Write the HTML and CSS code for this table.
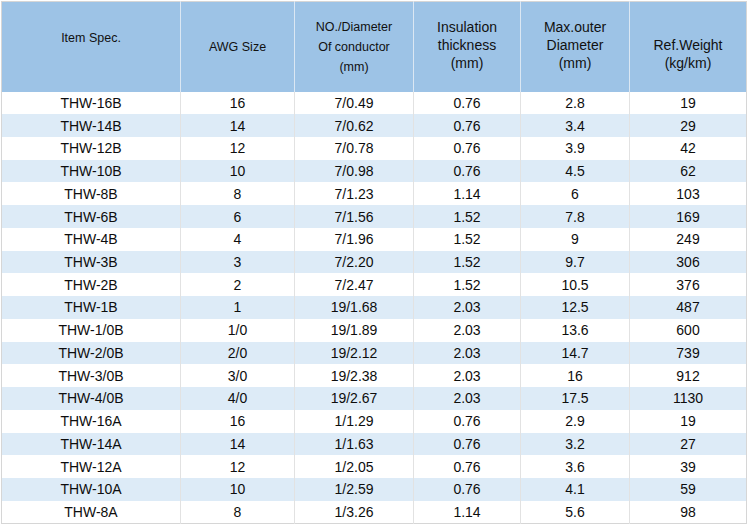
FILE: index.html
```html
<!DOCTYPE html>
<html>
<head>
<meta charset="utf-8">
<link rel="stylesheet" href="styles.css">
</head>
<body>
<table class="spec">
  <colgroup>
    <col class="c1"><col class="c2"><col class="c3"><col class="c4"><col class="c5"><col class="c6">
  </colgroup>
  <thead>
    <tr class="head">
      <th class="sm top">Item Spec.</th>
      <th class="sm">AWG Size</th>
      <th class="sm">NO./Diameter<br>Of conductor<br>(mm)</th>
      <th class="lg">Insulation<br>thickness<br>(mm)</th>
      <th class="lg">Max.outer<br>Diameter<br>(mm)</th>
      <th class="lg low">Ref.Weight<br>(kg/km)</th>
    </tr>
  </thead>
  <tbody>
    <tr><td>THW-16B</td><td>16</td><td>7/0.49</td><td>0.76</td><td>2.8</td><td>19</td></tr>
    <tr><td>THW-14B</td><td>14</td><td>7/0.62</td><td>0.76</td><td>3.4</td><td>29</td></tr>
    <tr><td>THW-12B</td><td>12</td><td>7/0.78</td><td>0.76</td><td>3.9</td><td>42</td></tr>
    <tr><td>THW-10B</td><td>10</td><td>7/0.98</td><td>0.76</td><td>4.5</td><td>62</td></tr>
    <tr><td>THW-8B</td><td>8</td><td>7/1.23</td><td>1.14</td><td>6</td><td>103</td></tr>
    <tr><td>THW-6B</td><td>6</td><td>7/1.56</td><td>1.52</td><td>7.8</td><td>169</td></tr>
    <tr><td>THW-4B</td><td>4</td><td>7/1.96</td><td>1.52</td><td>9</td><td>249</td></tr>
    <tr><td>THW-3B</td><td>3</td><td>7/2.20</td><td>1.52</td><td>9.7</td><td>306</td></tr>
    <tr><td>THW-2B</td><td>2</td><td>7/2.47</td><td>1.52</td><td>10.5</td><td>376</td></tr>
    <tr><td>THW-1B</td><td>1</td><td>19/1.68</td><td>2.03</td><td>12.5</td><td>487</td></tr>
    <tr><td>THW-1/0B</td><td>1/0</td><td>19/1.89</td><td>2.03</td><td>13.6</td><td>600</td></tr>
    <tr><td>THW-2/0B</td><td>2/0</td><td>19/2.12</td><td>2.03</td><td>14.7</td><td>739</td></tr>
    <tr><td>THW-3/0B</td><td>3/0</td><td>19/2.38</td><td>2.03</td><td>16</td><td>912</td></tr>
    <tr><td>THW-4/0B</td><td>4/0</td><td>19/2.67</td><td>2.03</td><td>17.5</td><td>1130</td></tr>
    <tr><td>THW-16A</td><td>16</td><td>1/1.29</td><td>0.76</td><td>2.9</td><td>19</td></tr>
    <tr><td>THW-14A</td><td>14</td><td>1/1.63</td><td>0.76</td><td>3.2</td><td>27</td></tr>
    <tr><td>THW-12A</td><td>12</td><td>1/2.05</td><td>0.76</td><td>3.6</td><td>39</td></tr>
    <tr><td>THW-10A</td><td>10</td><td>1/2.59</td><td>0.76</td><td>4.1</td><td>59</td></tr>
    <tr><td>THW-8A</td><td>8</td><td>1/3.26</td><td>1.14</td><td>5.6</td><td>98</td></tr>
  </tbody>
</table>
</body>
</html>
```

FILE: styles.css
```css
html, body {
  margin: 0;
  padding: 0;
  background: #ffffff;
}

body {
  padding: 1px 0 0 1px;
  font-family: "Liberation Sans", Arial, sans-serif;
  color: #000000;
}

.spec {
  border-collapse: collapse;
  table-layout: fixed;
  width: 745px;
  border: 1px solid #d6d6d6;
}

.c1 { width: 179px; }
.c2 { width: 114px; }
.c3 { width: 119px; }
.c4 { width: 107px; }
.c5 { width: 109px; }
.c6 { width: 117px; }

.head {
  height: 90px;
  background: #9dc3e6;
}

.head th {
  font-weight: normal;
  text-align: center;
  vertical-align: middle;
  padding: 0;
  color: #111111;
  border-left: 1px solid #dbe7f3;
}

.head th:first-child { border-left: none; }

.head .sm {
  font-size: 12.5px;
  line-height: 20px;
}

.head .lg {
  font-size: 14px;
  line-height: 18px;
  padding-bottom: 3px;
}

.head .top {
  vertical-align: top;
  padding-top: 26px;
}

.head .low {
  padding-top: 14px;
  padding-bottom: 0;
}

tbody tr {
  height: 22.74px;
}

tbody tr:nth-child(even) {
  background: #ddebf7;
}

tbody td {
  padding: 0;
  text-align: center;
  vertical-align: middle;
  font-size: 14px;
  line-height: 16px;
  color: #0d0d0d;
  border-left: 1px solid #e2e2e2;
}

tbody td:first-child { border-left: none; }
```
